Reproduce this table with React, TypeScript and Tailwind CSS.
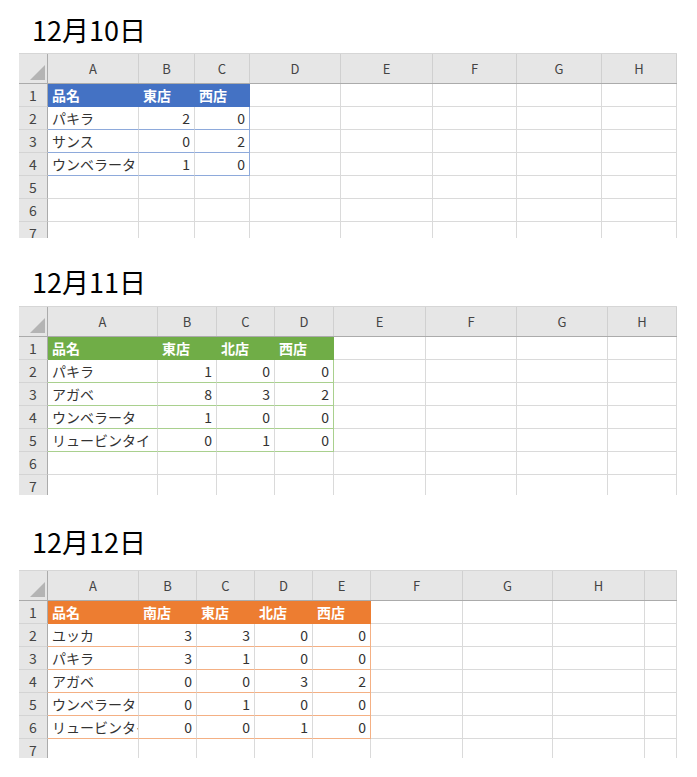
import React from "react";

type Theme = { head: string; line: string; edge: string };

const blue: Theme = {
  head: "bg-[#4472c4] border-b-[#4472c4] border-r-[#4472c4] text-white font-bold",
  line: "border-b-[#8eaadb]",
  edge: "border-r-[#8eaadb]",
};
const green: Theme = {
  head: "bg-[#70ad47] border-b-[#70ad47] border-r-[#70ad47] text-white font-bold",
  line: "border-b-[#a9d08e]",
  edge: "border-r-[#a9d08e]",
};
const orange: Theme = {
  head: "bg-[#ed7d31] border-b-[#ed7d31] border-r-[#ed7d31] text-white font-bold",
  line: "border-b-[#f4b084]",
  edge: "border-r-[#f4b084]",
};

type Sheet = {
  title: string;
  titleBox: string;
  gridBox: string;
  widths: string[];
  letters: string[];
  headers: string[];
  rows: (string | number)[][];
  theme: Theme;
};

const sheets: Sheet[] = [
  {
    title: "12月10日",
    titleBox: "h-[53px] pt-[11px]",
    gridBox: "h-[185px]",
    widths: ["w-[91px]", "w-[56px]", "w-[55px]", "w-[91px]", "w-[92px]", "w-[84px]", "w-[85px]", "w-[75px]"],
    letters: ["A", "B", "C", "D", "E", "F", "G", "H"],
    headers: ["品名", "東店", "西店"],
    rows: [
      ["パキラ", 2, 0],
      ["サンス", 0, 2],
      ["ウンベラータ", 1, 0],
    ],
    theme: blue,
  },
  {
    title: "12月11日",
    titleBox: "h-[68px] pt-[25px]",
    gridBox: "h-[189px]",
    widths: ["w-[110px]", "w-[59px]", "w-[58px]", "w-[59px]", "w-[92px]", "w-[91px]", "w-[91px]", "w-[69px]"],
    letters: ["A", "B", "C", "D", "E", "F", "G", "H"],
    headers: ["品名", "東店", "北店", "西店"],
    rows: [
      ["パキラ", 1, 0, 0],
      ["アガベ", 8, 3, 2],
      ["ウンベラータ", 1, 0, 0],
      ["リュービンタイ", 0, 1, 0],
    ],
    theme: green,
  },
  {
    title: "12月12日",
    titleBox: "h-[75px] pt-[28px]",
    gridBox: "h-[188px]",
    widths: ["w-[91px]", "w-[58px]", "w-[58px]", "w-[58px]", "w-[58px]", "w-[92px]", "w-[90px]", "w-[92px]", "w-[32px]"],
    letters: ["A", "B", "C", "D", "E", "F", "G", "H", ""],
    headers: ["品名", "南店", "東店", "北店", "西店"],
    rows: [
      ["ユッカ", 3, 3, 0, 0],
      ["パキラ", 3, 1, 0, 0],
      ["アガベ", 0, 0, 3, 2],
      ["ウンベラータ", 0, 1, 0, 0],
      ["リュービンタイ", 0, 0, 1, 0],
    ],
    theme: orange,
  },
];

function Grid({ sheet }: { sheet: Sheet }) {
  const cols = sheet.headers.length;
  const tableRows = sheet.rows.length + 1;

  return (
    <div className={`ml-[19px] w-[658px] overflow-hidden ${sheet.gridBox}`}>
      {/* column letters */}
      <div className="flex h-[31px] border-t border-b border-t-[#d6d6d6] border-b-[#ababab] bg-[#e6e6e6]">
        <div className="w-[29px] shrink-0 border-r border-r-[#ababab] flex items-end justify-end pr-[2px] pb-[3px]">
          <svg width="15" height="15" viewBox="0 0 15 15">
            <polygon points="15,0 15,15 0,15" fill="#b4b4b4" />
          </svg>
        </div>
        {sheet.widths.map((w, i) => (
          <div key={i} className={`${w} shrink-0 border-r border-r-[#d0d0d0] flex items-center justify-center text-[13px] text-[#444]`}>
            {sheet.letters[i]}
          </div>
        ))}
      </div>

      {Array.from({ length: 7 }).map((_, r) => {
        const inTable = r < tableRows;
        const isHead = r === 0;
        const data = isHead ? sheet.headers : sheet.rows[r - 1];
        return (
          <div key={r} className="flex h-[23px]">
            <div className="w-[29px] shrink-0 bg-[#e6e6e6] border-r border-b border-r-[#ababab] border-b-[#d4d4d4] flex items-center justify-center text-[14px] text-[#444]">
              {r + 1}
            </div>
            {sheet.widths.map((w, c) => {
              const inCol = c < cols;
              let cls = `${w} shrink-0 border-r border-b flex items-center overflow-hidden whitespace-nowrap text-[14px]`;
              let value: string | number = "";
              if (inTable && inCol) {
                value = data[c];
                if (isHead) {
                  cls += ` ${sheet.theme.head} pl-[4px]`;
                } else {
                  cls += ` ${sheet.theme.line} text-[#333]`;
                  cls += c === cols - 1 ? ` ${sheet.theme.edge}` : " border-r-[#dadada]";
                  cls += c === 0 ? " pl-[4px]" : " justify-end pr-[4px]";
                }
              } else {
                cls += " border-r-[#dadada] border-b-[#dadada]";
              }
              return (
                <div key={c} className={cls}>
                  {value}
                </div>
              );
            })}
          </div>
        );
      })}
    </div>
  );
}

export default function App() {
  return (
    <div className="w-[697px] h-[777px] bg-white overflow-hidden font-['Noto_Sans_CJK_JP',sans-serif]">
      {sheets.map((s) => (
        <div key={s.title}>
          <div className={`${s.titleBox} pl-[32px]`}>
            <h1 className="text-[27px] leading-[38px] text-black">{s.title}</h1>
          </div>
          <Grid sheet={s} />
        </div>
      ))}
    </div>
  );
}
